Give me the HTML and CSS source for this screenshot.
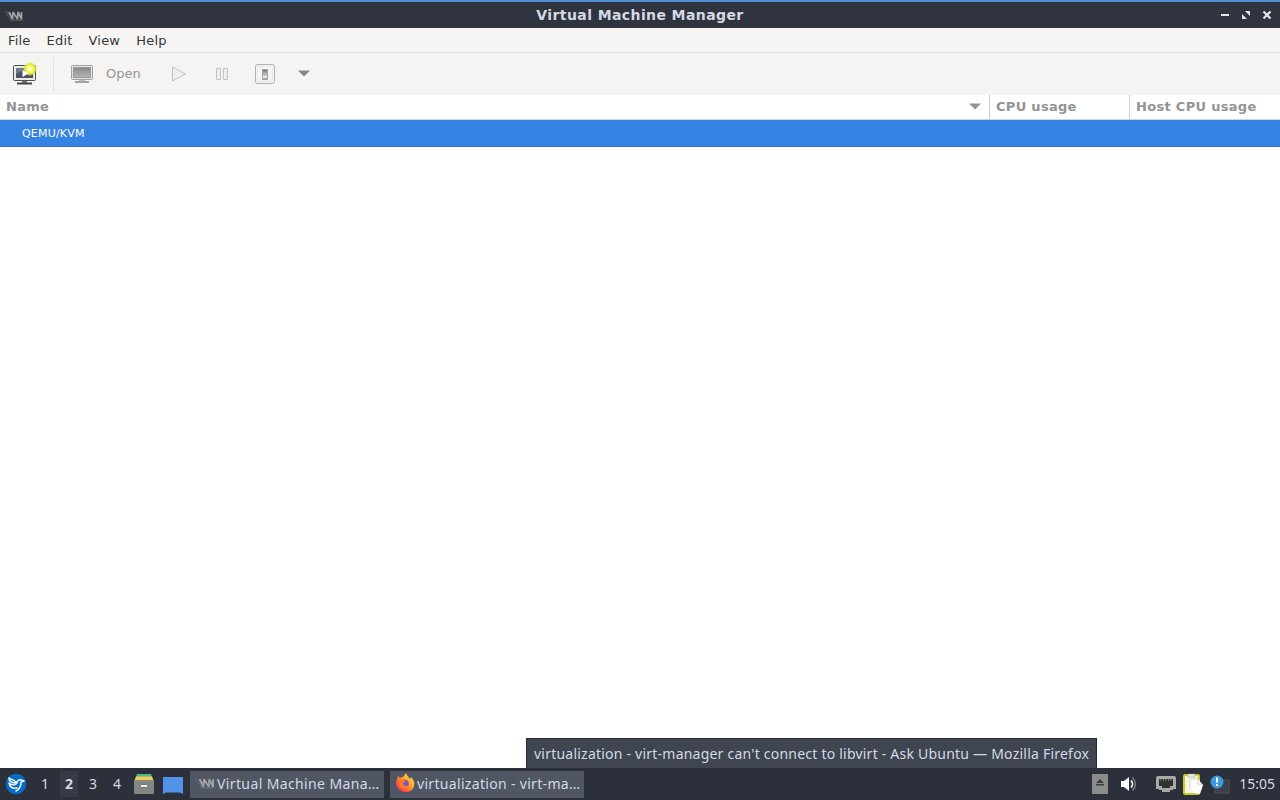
FILE: index.html
```html
<!DOCTYPE html>
<html lang="en">
<head>
    <meta charset="UTF-8">
    <title>Virtual Machine Manager</title>
    <link rel="stylesheet" href="styles.css">
</head>
<body>
    <svg width="0" height="0" class="defs">
        <defs>
            <linearGradient id="screen" x1="0" y1="0" x2="0" y2="1"><stop offset="0" stop-color="#858988"/><stop offset="1" stop-color="#b4b8b5"/></linearGradient>
            <linearGradient id="knob" x1="0" y1="0" x2="0" y2="1"><stop offset="0" stop-color="#777"/><stop offset="1" stop-color="#f4f4f3"/></linearGradient>
            <radialGradient id="glow"><stop offset="0" stop-color="#fffff0"/><stop offset=".35" stop-color="#fafa83"/><stop offset=".75" stop-color="#dfe82a"/><stop offset="1" stop-color="#dfe82a" stop-opacity="0"/></radialGradient>
            <linearGradient id="fire" x1="1" y1="0" x2="0" y2="1"><stop offset="0" stop-color="#fff04b"/><stop offset=".4" stop-color="#ffab29"/><stop offset=".7" stop-color="#ff563c"/><stop offset="1" stop-color="#e82577"/></linearGradient>
            <symbol id="vmm" viewBox="0 0 18 12">
                <path d="M0 2h3M1 4h3M2 6h2M4 8h2" stroke="#6b6d72" stroke-width=".8"/>
                <path d="M4 2l3.500 7L8 2l4.500 7L13 2l3.500 7V2" fill="none" stroke="#a2a2a6" stroke-width="1.700" stroke-linejoin="bevel"/>
                <path d="M5 10h13" stroke="#75767b"/>
            </symbol>
        </defs>
    </svg>

    <header class="titlebar">
        <svg class="title-icon" width="18" height="12"><use href="#vmm"/></svg>
        <h1>Virtual Machine Manager</h1>
        <div class="window-buttons">
            <svg width="10" height="10" viewBox="0 0 10 10"><path d="M1 5h8" stroke="#e2e6ec" stroke-width="2"/></svg>
            <svg width="10" height="10" viewBox="0 0 10 10" fill="#e2e6ec"><path d="M4 1h5v5zM1 4v5h5z"/></svg>
            <svg width="10" height="10" viewBox="0 0 10 10"><path d="M1.500 1.500l7 7M8.500 1.500l-7 7" stroke="#e2e6ec" stroke-width="2.300"/></svg>
        </div>
    </header>

    <nav class="menubar">
        <span>File</span>
        <span>Edit</span>
        <span>View</span>
        <span>Help</span>
    </nav>

    <div class="toolbar">
        <div class="tool new">
            <svg width="26" height="24" viewBox="0 0 26 24">
                <rect x="1.500" y="3.500" width="22" height="15" rx="1" fill="#e8e9e5" stroke="#4e514e"/>
                <rect x="4" y="6" width="17" height="10" fill="#4b5267"/>
                <path d="M4 6h12L4 12z" fill="#747b8b"/>
                <path d="M10 19h5v2h-5z" fill="#777"/>
                <path d="M5 21.500h15" stroke="#454745" stroke-width="2"/>
                <circle cx="18" cy="7" r="7" fill="url(#glow)"/>
                <path d="M10.500 8v7l6-3.500z" fill="#fff"/>
            </svg>
        </div>
        <div class="tool open">
            <svg width="24" height="22" viewBox="0 0 24 22">
                <rect x="1.500" y="2.500" width="21" height="14" rx="1" fill="#e5e6e3" stroke="#a0a29f"/>
                <rect x="3.500" y="4.500" width="17" height="10" fill="url(#screen)" stroke="#969a97"/>
                <path d="M9 17h6v1H9z" fill="#bbb"/>
                <path d="M5 19h14" stroke="#a2a3a1" stroke-width="2"/>
            </svg>
            <span>Open</span>
        </div>
        <svg class="tool run" width="16" height="18" viewBox="0 0 16 18"><path d="M1.500 2v14L14.500 9z" fill="#efefed" stroke="#c1c1bf" stroke-linejoin="round"/></svg>
        <svg class="tool pause" width="14" height="14" viewBox="0 0 14 14"><path d="M1.500 1.500h4v11h-4zM8.500 1.500h4v11h-4z" fill="#eeeeec" stroke="#c3c3c1"/></svg>
        <svg class="tool shutdown" width="20" height="20" viewBox="0 0 20 20">
            <rect x=".5" y=".5" width="19" height="19" rx="2" fill="#f4f4f3" stroke="#b0b0af"/>
            <rect x="2.500" y="2.500" width="15" height="15" fill="none" stroke="#e9e9e8"/>
            <rect x="7" y="5" width="6" height="11" fill="#a5a5a5"/>
            <rect x="8" y="6" width="4" height="8" fill="url(#knob)"/>
        </svg>
        <svg class="tool arrow" width="12" height="7" viewBox="0 0 12 7"><path d="M0 .5h12l-6 6z" fill="#858786"/></svg>
    </div>

    <main class="vm-list">
        <div class="list-head">
            <div class="col-name">
                <span>Name</span>
                <svg width="12" height="7" viewBox="0 0 12 7"><path d="M0 .5h12l-6 6z" fill="#929595"/></svg>
            </div>
            <div class="col-cpu">CPU usage</div>
            <div class="col-host">Host CPU usage</div>
        </div>
        <div class="row selected">QEMU/KVM</div>
    </main>

    <footer class="panel">
        <svg class="launcher" width="22" height="22" viewBox="0 0 22 22">
            <circle cx="11" cy="11" r="10.300" fill="#086cc5"/>
            <path d="M4 5c3 2 6 2 8 5 0-2 2-4 4-3l3 1-3 1c0 4-1 7-5 9M12 10c-1 2-4 3-8 0 1 4 4 6 8 5M4 5c0 3 3 5 8 5" fill="none" stroke="#f1f8ff" stroke-width="1.500" stroke-linejoin="round" stroke-linecap="round"/>
        </svg>
        <div class="desktops">
            <span>1</span>
            <span class="current">2</span>
            <span>3</span>
            <span>4</span>
        </div>
        <svg class="quick-files" width="22" height="22" viewBox="0 0 22 22">
            <path d="M4 1h14l1 4H3z" fill="#52b692"/>
            <path d="M3 3.500h16l2 5H1z" fill="#f2ca59"/>
            <path d="M1 7h20v13a1 1 0 0 1-1 1H2a1 1 0 0 1-1-1z" fill="#858582"/>
            <rect x="7.500" y="11.500" width="7" height="3" rx="1" fill="#f5f5f4" stroke="#707070"/>
        </svg>
        <svg class="quick-desktop" width="20" height="17" viewBox="0 0 20 17"><path d="M0 0h20v17l-3-1.500H3L0 17z" fill="#5294e9"/></svg>
        <div class="task">
            <svg width="20" height="13"><use href="#vmm"/></svg>
            <span class="task-vmm">Virtual Machine Mana…</span>
        </div>
        <div class="task">
            <svg width="20" height="20" viewBox="0 0 20 20">
                <path d="M2 6l1-3 2 2c1-1 2-1 3-1l3-4c1 3 3 4 4 6l1-2c3 3 4 6 3 9-1 4-4 6-8 6-5 0-9-3-10-8 0-2 0-4 1-5z" fill="url(#fire)"/>
                <circle cx="10" cy="10.500" r="3.800" fill="#8351c6"/>
                <path d="M4 7c3-1 5 0 7 1l-3 2c0 3 3 4 6 2-2 5-8 5-10 0-1-2-1-3 0-5z" fill="#ff7b2b"/>
            </svg>
            <span class="task-firefox">virtualization - virt-ma…</span>
        </div>

        <div class="tray">
            <svg class="eject" width="16" height="20" viewBox="0 0 16 20"><path d="M0 0h16v20H0z" fill="#8c8c8b"/><path d="M4 9l4-4 4 4zM4 10h8v1.500H4z" fill="#3c3d3e"/></svg>
            <svg class="volume" width="18" height="16" viewBox="0 0 18 16">
                <path d="M1 5h3l5-4v14l-5-4H1z" fill="#fff"/>
                <path d="M11 4.500c2 2 2 5 0 7" fill="none" stroke="#eef0f2" stroke-width="1.800"/>
                <path d="M12.500 1.500c4 4 4 9 0 13" fill="none" stroke="#7b7f88" stroke-width="1.500"/>
            </svg>
            <svg class="network" width="20" height="18" viewBox="0 0 20 18">
                <path d="M2 1h16a2 2 0 0 1 2 2v11h-3v1h-3v2H6v-2H3v-1H0V3a2 2 0 0 1 2-2z" fill="#a8a8a5"/>
                <path d="M3 4h14v7h-3v2H6v-2H3z" fill="#30332f"/>
                <path d="M5 4v2M7.500 4v2M10 4v2M12.500 4v2M15 4v2" stroke="#74766f"/>
            </svg>
            <svg class="clipboard" width="20" height="22" viewBox="0 0 20 22">
                <rect x="1" y="2" width="15" height="19" rx="1" fill="#f6f5dc" stroke="#c9c935" stroke-width="2"/>
                <path d="M5 1h7v3H5z" fill="#eee" stroke="#999" stroke-width=".5"/>
                <path d="M7 6h8l5 6-3 9-6-1-4-4z" fill="#fff"/>
                <path d="M7 16V6h8v5l5 1" fill="none" stroke="#d8d8ce"/>
            </svg>
            <svg class="notify" width="20" height="19" viewBox="0 0 20 19">
                <path d="M5 5h14v13H5z" fill="#3b3f46" stroke="#50524f"/>
                <circle cx="7" cy="7" r="6.500" fill="#3d99df"/>
                <path d="M7 2.500v5M7 9v2" stroke="#fff" stroke-width="2"/>
            </svg>
            <time>15:05</time>
        </div>
        <div class="tooltip"><span>virtualization - virt-manager can't connect to libvirt - Ask Ubuntu — Mozilla Firefox</span></div>
    </footer>
</body>
</html>
```
FILE: styles.css
```css
* {
    box-sizing: border-box;
}
body {
    margin: 0;
    height: 800px;
    display: flex;
    flex-direction: column;
    overflow: hidden;
    background: #fff;
    color: #353739;
    font-family: "DejaVu Sans", sans-serif;
    font-size: 13px;
}
svg {
    display: block;
    flex: none;
}
.defs {
    position: absolute;
}
.titlebar {
    height: 28px;
    flex: none;
    display: grid;
    grid-template-columns: 70px 1fr 70px;
    align-items: center;
    border-top: 2px solid #4c8fd5;
    background: #2f343f;
}
.title-icon {
    margin: 2px 0 0 5px;
}
h1 {
    margin: 0;
    text-align: center;
    color: #d3dae3;
    font-size: 14px;
    letter-spacing: 0.4px;
    line-height: 26px;
}
.window-buttons {
    display: flex;
    justify-content: flex-end;
    gap: 11px;
    padding-right: 8px;
}
.menubar {
    height: 25px;
    flex: none;
    display: flex;
    gap: 16px;
    padding-left: 8px;
    letter-spacing: 0.2px;
    line-height: 25px;
    background: #f6f5f4;
    border-bottom: 1px solid #dfddda;
}
.toolbar {
    height: 42px;
    flex: none;
    display: flex;
    align-items: center;
    padding-bottom: 1px;
    background: #f5f4f2;
}
.new {
    width: 54px;
    height: 34px;
    display: flex;
    align-items: center;
    padding-left: 12px;
    border-right: 1px solid #e3e1df;
}
.open {
    width: 116px;
    display: flex;
    align-items: center;
    gap: 12px;
    padding-left: 16px;
    color: #929595;
}
.run {
    margin-left: 1px;
}
.pause {
    margin-left: 28px;
}
.shutdown {
    margin-left: 26px;
}
.arrow {
    margin-left: 23px;
}
.vm-list {
    flex: 1;
    background: #fff;
}
.list-head {
    height: 25px;
    display: grid;
    grid-template-columns: 990px 140px 150px;
    color: #929595;
    font-weight: bold;
    letter-spacing: 0.3px;
    line-height: 23px;
    border-bottom: 1px solid #d5d5d5;
}
.col-name {
    display: flex;
    justify-content: space-between;
    padding: 0 8px 0 6px;
    border-right: 1px solid #d0d0cf;
}
.col-name svg {
    margin-top: 8px;
}
.col-cpu {
    padding-left: 6px;
    border-right: 1px solid #d0d0cf;
}
.col-host {
    padding-left: 6px;
}
.row {
    height: 27px;
    padding-left: 22px;
    font-size: 11px;
    letter-spacing: 0.2px;
    line-height: 27px;
}
.selected {
    color: #fff;
    background: #3584e4;
    border-bottom: 1px solid #3974bd;
}
.panel {
    position: relative;
    height: 32px;
    flex: none;
    display: flex;
    align-items: center;
    background: #2b303b;
    color: #d3dae3;
    font-family: "Noto Sans", sans-serif;
    font-size: 14px;
}
.launcher {
    margin-left: 5px;
}
.desktops {
    display: flex;
    gap: 6px;
    margin-left: 9px;
}
.desktops span {
    width: 18px;
    height: 26px;
    line-height: 26px;
    text-align: center;
}
.desktops .current {
    background: #363a45;
    font-weight: bold;
}
.quick-files {
    margin-left: 7px;
}
.quick-desktop {
    margin: 2px 7px 0 8px;
}
.task {
    width: 194px;
    height: 27px;
    display: flex;
    align-items: center;
    gap: 2px;
    margin-right: 6px;
    padding: 0 0 2px 5px;
    background: #505663;
    white-space: nowrap;
}
.task-vmm {
    letter-spacing: 0.38px;
}
.task-firefox {
    letter-spacing: 0.32px;
}
.tray {
    display: flex;
    align-items: center;
    margin-left: auto;
    padding-right: 5px;
}
.volume {
    margin-left: 12px;
}
.network {
    margin-left: 18px;
}
.clipboard {
    margin-left: 7px;
}
.notify {
    margin-left: 7px;
    margin-right: 9px;
}
.tray time {
    line-height: 18px;
    margin-bottom: 1px;
}
.tooltip {
    position: absolute;
    left: 526px;
    bottom: 32px;
    width: 571px;
    height: 30px;
    padding-left: 7px;
    border: 1px solid #252a34;
    border-bottom: 0;
    background: #404552;
    letter-spacing: 0.225px;
    line-height: 30px;
    white-space: nowrap;
}
```
